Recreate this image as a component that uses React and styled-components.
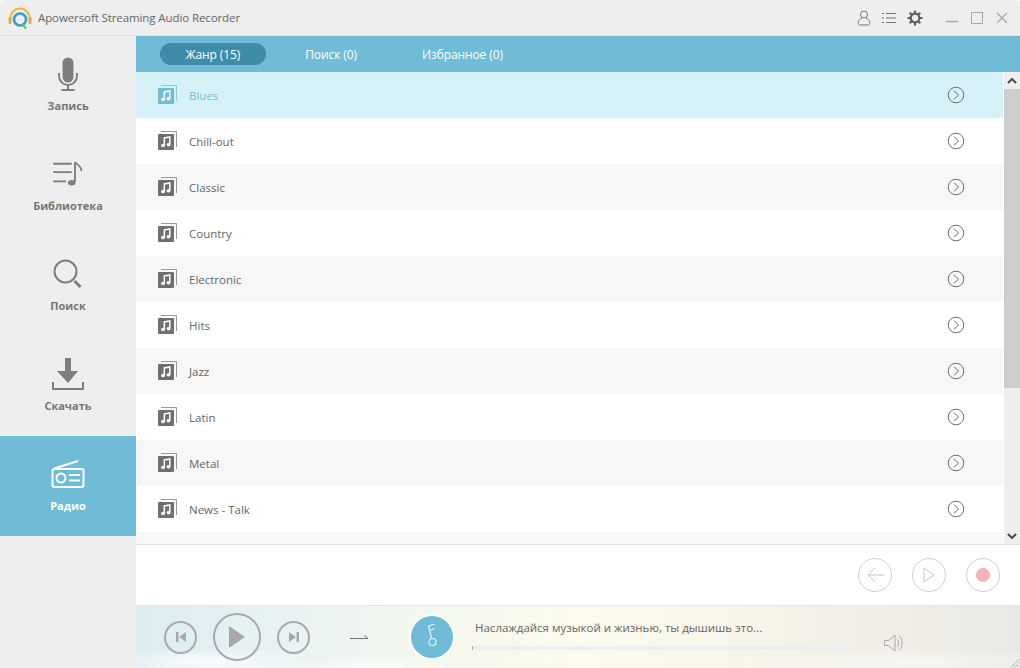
import React from "react";
import styled, { createGlobalStyle } from "styled-components";

const genres = ["Blues", "Chill-out", "Classic", "Country", "Electronic", "Hits", "Jazz", "Latin", "Metal", "News - Talk", ""];

const GlobalStyle = createGlobalStyle`
  html, body { margin: 0; padding: 0; background: #fff; }
  body { font-family: "Open Sans", "Noto Sans", "Liberation Sans", sans-serif; }
  * { box-sizing: border-box; }
`;

const MicIcon = () => (
  <svg width="32" height="34" viewBox="0 0 32 34" fill="none" stroke="#7d7d7d">
    <rect x="10.500" y="0.500" width="11" height="25" rx="5.500" fill="#7d7d7d" stroke="none" />
    <path d="M7 16v3a9 9 0 0 0 18 0v-3" strokeWidth="2" />
    <path d="M16 28v5M9.500 33h13" strokeWidth="2" />
  </svg>
);
const LibraryIcon = () => (
  <svg width="32" height="26" viewBox="0 0 34 28" fill="none" stroke="#7d7d7d" strokeWidth="2">
    <path d="M1 3h20M1 12h20M1 22h14" />
    <path d="M24.500 1v22" />
    <path d="M24.500 1c2 3 7 4 7 10" strokeWidth="1.800" />
    <ellipse cx="21" cy="23.500" rx="4" ry="3" fill="#7d7d7d" stroke="none" />
  </svg>
);
const SearchIcon = () => (
  <svg width="30" height="30" viewBox="0 0 30 30" fill="none" stroke="#7d7d7d">
    <circle cx="12.500" cy="12.500" r="11" strokeWidth="2" />
    <path d="M21.500 22l6 6" strokeWidth="3" />
  </svg>
);
const DownloadIcon = () => (
  <svg width="34" height="34" viewBox="0 0 34 34" fill="none">
    <path d="M14 1h6v13h7L17 26 6 14h8z" fill="#7d7d7d" />
    <path d="M2 25v7h30v-7" stroke="#7d7d7d" strokeWidth="2" />
  </svg>
);
const RadioIcon = () => (
  <svg width="34" height="28" viewBox="0 0 34 28" fill="none" stroke="#fff" strokeWidth="2">
    <path d="M3 8.500L27 1" />
    <rect x="1.500" y="9" width="31" height="18" rx="2" />
    <circle cx="10" cy="18" r="4.500" />
    <path d="M18 15h11M18 20.500h11" />
  </svg>
);

const navItems = [
  { label: "Запись", icon: <MicIcon /> },
  { label: "Библиотека", icon: <LibraryIcon /> },
  { label: "Поиск", icon: <SearchIcon /> },
  { label: "Скачать", icon: <DownloadIcon /> },
  { label: "Радио", icon: <RadioIcon />, active: true },
];

const Logo = () => (
  <svg width="24" height="24" viewBox="0 0 24 24" fill="none">
    <path d="M2.500 12a9.500 9.500 0 0 1 19 0" stroke="#f2b33d" strokeWidth="2" />
    <rect x="0.500" y="11" width="3" height="7" rx="1.500" fill="#f2a33a" />
    <rect x="20.500" y="11" width="3" height="7" rx="1.500" fill="#f2a33a" />
    <circle cx="12" cy="13.500" r="6" stroke="#2f9fd8" strokeWidth="2.600" />
    <path d="M14 18l4 4.500" stroke="#6cc24a" strokeWidth="2.200" />
  </svg>
);

const AlbumIcon = ({ color }) => (
  <svg width="20" height="20" viewBox="0 0 20 20" fill="none">
    <path d="M3 0.500h15.500V16" stroke={color} strokeWidth="1" opacity="0.7" />
    <rect x="0" y="3" width="16" height="16" rx="1" fill={color} />
    <path d="M6.300 14.500V7l5.500-1v7.500" stroke="#fff" strokeWidth="1.500" />
    <ellipse cx="5" cy="14.500" rx="2" ry="1.700" fill="#fff" />
    <ellipse cx="10.500" cy="13.700" rx="2" ry="1.700" fill="#fff" />
  </svg>
);

const Chevron = () => (
  <svg width="18" height="18" viewBox="0 0 18 18" fill="none" stroke="#6f6f6f">
    <circle cx="9" cy="9" r="7.800" />
    <path d="M7 4.800L11.500 9 7 13.200" />
  </svg>
);

export default function App() {
  return (
    <Wrapper>
      <GlobalStyle />
      <TitleBar>
        <Brand>
          <Logo />
          <AppName>Apowersoft Streaming Audio Recorder</AppName>
        </Brand>
        <TitleTools>
          <svg width="14" height="16" viewBox="0 0 14 16" fill="none" stroke="#777">
            <circle cx="7" cy="4.500" r="3.500" />
            <path d="M5 8c-5 2-4.500 7-2.500 7h9c2 0 2.500-5-2.500-7" />
          </svg>
          <svg width="14" height="12" viewBox="0 0 14 12" fill="none" stroke="#777">
            <path d="M0 1.500h2M4 1.500h10M0 6h2M4 6h10M0 10.500h2M4 10.500h10" />
          </svg>
          <svg width="16" height="16" viewBox="0 0 16 16" fill="none" stroke="#5f5f5f">
            <circle cx="8" cy="8" r="4.300" strokeWidth="2.200" />
            <path d="M8 0.500v3M8 12.500v3M0.500 8h3M12.500 8h3M2.700 2.700l2.100 2.100M11.200 11.200l2.100 2.100M2.700 13.300l2.100-2.100M11.200 4.800l2.100-2.100" strokeWidth="2.200" />
          </svg>
        </TitleTools>
        <WindowControls>
          <svg width="12" height="12" viewBox="0 0 12 12" fill="none" stroke="#a8a8a8" strokeWidth="1.500"><path d="M0 9.500h12" /></svg>
          <svg width="12" height="12" viewBox="0 0 12 12" fill="none" stroke="#a8a8a8"><rect x="0.500" y="0.500" width="11" height="11" /></svg>
          <svg width="12" height="12" viewBox="0 0 12 12" fill="none" stroke="#a8a8a8" strokeWidth="1.200"><path d="M1 1l10 10M11 1L1 11" /></svg>
        </WindowControls>
      </TitleBar>
      <Body>
        <Sidebar>
          {navItems.map((item) => (
            <NavItem key={item.label} $active={item.active}>
              <NavIcon>{item.icon}</NavIcon>
              <NavLabel>{item.label}</NavLabel>
            </NavItem>
          ))}
        </Sidebar>
        <Main>
          <Tabs>
            <Tab $active>Жанр (15)</Tab>
            <Tab>Поиск (0)</Tab>
            <Tab>Избранное (0)</Tab>
          </Tabs>
          <ListArea>
            <Rows>
              {genres.map((g, i) => (
                <Row key={i} $selected={i === 0} $odd={i % 2 === 0}>
                  {g && (
                    <>
                      <AlbumIcon color={i === 0 ? "#72bcd6" : "#6f6f6f"} />
                      <RowName $selected={i === 0}>{g}</RowName>
                      <Chevron />
                    </>
                  )}
                </Row>
              ))}
            </Rows>
            <Scrollbar>
              <ScrollArrow>
                <svg width="10" height="6" viewBox="0 0 10 6" fill="none" stroke="#4a4a4a" strokeWidth="2"><path d="M1 5l4-4 4 4" /></svg>
              </ScrollArrow>
              <ScrollThumb />
              <ScrollRest />
              <ScrollArrow>
                <svg width="10" height="6" viewBox="0 0 10 6" fill="none" stroke="#4a4a4a" strokeWidth="2"><path d="M1 1l4 4 4-4" /></svg>
              </ScrollArrow>
            </Scrollbar>
          </ListArea>
          <Actions>
            <ActionButton>
              <svg width="17" height="16" viewBox="0 0 17 16" fill="none" stroke="#c6c6c6"><path d="M17 8H1M8 1L1 8l7 7" /></svg>
            </ActionButton>
            <ActionButton>
              <svg width="14" height="18" viewBox="0 0 14 18" fill="none" stroke="#c6c6c6"><path d="M2 2v14l10-7z" /></svg>
            </ActionButton>
            <ActionButton>
              <RecordDot />
            </ActionButton>
          </Actions>
          <Player>
            <PlayerButton $size={33}>
              <svg width="12" height="12" viewBox="0 0 12 12" fill="#a8a8a8"><path d="M1 1h2.500v10H1zM11 1v10L4 6z" /></svg>
            </PlayerButton>
            <PlayerButton $size={48} $gap={16}>
              <svg width="16" height="22" viewBox="0 0 16 22" fill="#a8a8a8"><path d="M0 0l16 11L0 22z" /></svg>
            </PlayerButton>
            <PlayerButton $size={33} $gap={16}>
              <svg width="12" height="12" viewBox="0 0 12 12" fill="#a8a8a8"><path d="M1 1v10l7-5zM8.500 1H11v10H8.500z" /></svg>
            </PlayerButton>
            <LoopArrow>
              <svg width="18" height="6" viewBox="0 0 18 6" fill="none" stroke="#777"><path d="M0 4.500h18L14 1.500" /></svg>
            </LoopArrow>
            <Disc>
              <svg width="14" height="26" viewBox="0 0 14 26" fill="none" stroke="#e8f6fa" strokeWidth="1.100">
                <circle cx="7.500" cy="18" r="3.500" />
                <path d="M6.500 14.500L3.500 2 10 0M4.500 6.500l5-2" />
              </svg>
            </Disc>
            <Track>
              <TrackTitle>Наслаждайся музыкой и жизнью, ты дышишь это...</TrackTitle>
              <Progress />
            </Track>
            <VolumeIcon>
              <svg width="20" height="18" viewBox="0 0 20 18" fill="none" stroke="#a9a9a9">
                <path d="M0.500 6.500h4L11 1v16l-6.500-5.500h-4z" />
                <path d="M13.500 5.500c1.500 2 1.500 5 0 7M15.500 2c3.500 3.500 3.500 10.500 0 14" />
              </svg>
            </VolumeIcon>
            <Grip>
              <svg width="10" height="10" viewBox="0 0 10 10" fill="none" stroke="#b5b5b5"><path d="M9.500 1L1 9.500M9.500 4.500L4.500 9.500M9.500 7.500L7.500 9.500" /></svg>
            </Grip>
          </Player>
        </Main>
      </Body>
    </Wrapper>
  );
}

const Wrapper = styled.div`
  width: 1020px;
  height: 668px;
  display: flex;
  flex-direction: column;
  overflow: hidden;
`;
const TitleBar = styled.header`
  height: 36px;
  flex: none;
  display: flex;
  align-items: center;
  padding: 0 8px 0 8px;
  background: #eeeeee;
  border-bottom: 1px solid #cfe6ee;
  border-radius: 4px 4px 0 0;
`;
const Brand = styled.div`
  display: flex;
  align-items: center;
  gap: 6px;
  flex: 1;
`;
const AppName = styled.span`
  font-size: 11.5px;
  color: #666;
  letter-spacing: -0.1px;
`;
const TitleTools = styled.div`
  display: flex;
  align-items: center;
  gap: 11px;
  margin-right: 23px;
`;
const WindowControls = styled.div`
  display: flex;
  align-items: center;
  gap: 13px;
  margin-right: 4px;
`;
const Body = styled.div`
  flex: 1;
  display: flex;
  min-height: 0;
`;
const Sidebar = styled.nav`
  width: 136px;
  flex: none;
  background: #eeeeee;
`;
const NavItem = styled.div`
  height: 100px;
  padding-top: 20px;
  display: flex;
  flex-direction: column;
  align-items: center;
  background: ${(p) => (p.$active ? "#70bbd5" : "transparent")};
  color: ${(p) => (p.$active ? "#fff" : "#757575")};
`;
const NavIcon = styled.div`
  height: 36px;
  display: flex;
  align-items: center;
  justify-content: center;
`;
const NavLabel = styled.span`
  margin-top: 5px;
  font-size: 11px;
  font-weight: 700;
  line-height: 18px;
`;
const Main = styled.main`
  flex: 1;
  min-width: 0;
  display: flex;
  flex-direction: column;
`;
const Tabs = styled.div`
  height: 36px;
  flex: none;
  display: flex;
  align-items: center;
  gap: 14px;
  padding-left: 24px;
  background: #70bbd5;
`;
const Tab = styled.div`
  height: 22px;
  padding: 0 25.500px;
  display: flex;
  align-items: center;
  border-radius: 11px;
  font-size: 12px;
  letter-spacing: -0.1px;
  color: #fff;
  background: ${(p) => (p.$active ? "#3f8ca8" : "transparent")};
`;
const ListArea = styled.div`
  height: 473px;
  flex: none;
  display: flex;
  border-bottom: 1px solid #e2e2e2;
`;
const Rows = styled.div`
  flex: 1;
  min-width: 0;
  overflow: hidden;
  margin-right: 1px;
`;
const Row = styled.div`
  height: 46px;
  display: flex;
  align-items: center;
  padding: 0 38px 0 22px;
  background: ${(p) => (p.$selected ? "#d7f1f9" : p.$odd ? "#f7f7f7" : "#fff")};
`;
const RowName = styled.span`
  flex: 1;
  margin-left: 11px;
  font-size: 11.500px;
  color: ${(p) => (p.$selected ? "#72bcd6" : "#666")};
`;
const Scrollbar = styled.div`
  width: 16px;
  flex: none;
  display: flex;
  flex-direction: column;
  background: #eeeeee;
`;
const ScrollArrow = styled.div`
  height: 17px;
  flex: none;
  display: flex;
  align-items: center;
  justify-content: center;
`;
const ScrollThumb = styled.div`
  height: 299px;
  flex: none;
  background: #cdcdcd;
`;
const ScrollRest = styled.div`
  flex: 1;
`;
const Actions = styled.div`
  height: 60px;
  flex: none;
  display: flex;
  align-items: center;
  justify-content: flex-end;
  gap: 20px;
  padding-right: 20px;
  background: #fff;
`;
const ActionButton = styled.div`
  width: 34px;
  height: 34px;
  display: flex;
  align-items: center;
  justify-content: center;
  border: 1px solid #cfcfcf;
  border-radius: 50%;
`;
const RecordDot = styled.div`
  width: 14px;
  height: 14px;
  border-radius: 50%;
  background: #f2b3b7;
`;
const Player = styled.footer`
  position: relative;
  flex: 1;
  display: flex;
  align-items: center;
  padding: 0 0 0 28px;
  border-top: 1px solid #e6e6e6;
  background:
    radial-gradient(ellipse 120px 14px at 70px 56px, rgba(255, 255, 255, 0.8), transparent),
    radial-gradient(ellipse 90px 10px at 230px 60px, rgba(255, 255, 255, 0.6), transparent),
    radial-gradient(ellipse 200px 14px at 780px 56px, rgba(255, 255, 255, 0.55), transparent),
    linear-gradient(90deg, #dcecf1 0%, #e9f3f3 18%, #f3f7ee 32%, #fbfaec 50%, #f7f5e9 70%, #eeece4 88%, #e9e8e4 100%);
`;
const PlayerButton = styled.div`
  width: ${(p) => p.$size}px;
  height: ${(p) => p.$size}px;
  margin-left: ${(p) => p.$gap || 0}px;
  flex: none;
  display: flex;
  align-items: center;
  justify-content: center;
  border: 2px solid #a9a9a9;
  border-radius: 50%;
`;
const LoopArrow = styled.div`
  margin-left: 40px;
  display: flex;
`;
const Disc = styled.div`
  width: 42px;
  height: 42px;
  margin-left: 43px;
  flex: none;
  display: flex;
  align-items: center;
  justify-content: center;
  border-radius: 50%;
  background: #70bbd5;
  box-shadow: 0 0 0 2px rgba(255, 255, 255, 0.65);
`;
const Track = styled.div`
  width: 378px;
  margin: -4px 0 0 19px;
`;
const TrackTitle = styled.div`
  margin-left: 3px;
  font-size: 11.500px;
  line-height: 16px;
  color: #666;
`;
const Progress = styled.div`
  height: 4px;
  margin-top: 10px;
  background: #eceff0;
  border-left: 1px solid #aaa;
`;
const VolumeIcon = styled.div`
  margin: 12px 0 0 34px;
  display: flex;
`;
const Grip = styled.div`
  position: absolute;
  right: 0;
  bottom: 0;
  display: flex;
`;
